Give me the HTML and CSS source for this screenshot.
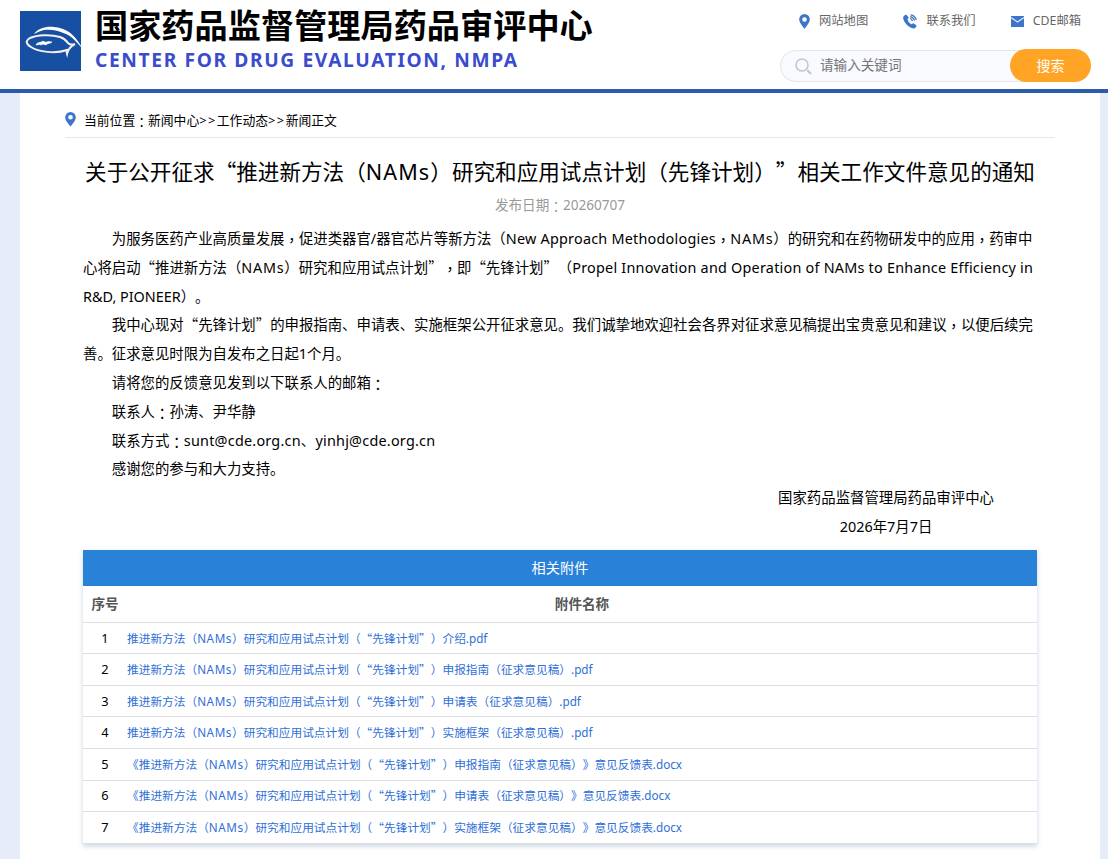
FILE: index.html
```html
<!DOCTYPE html>
<html lang="zh-CN">

<head>
    <meta charset="UTF-8">
    <meta name="viewport" content="width=device-width, initial-scale=1.0">
    <title>国家药品监督管理局药品审评中心</title>
    <link rel="stylesheet" href="styles.css">
</head>

<body>
    <header class="header">
        <div class="brand">
            <svg class="logo" width="64" height="60" viewBox="0 0 64 60">
                <rect width="61" height="60" fill="#1750a2" />
                <path d="M14 23C18 17 27 15 34 16C45 17 52 22 57 29L64 39C57 32 53 26 46 23C38 19 30 18 24 19C19 20 17 22 14 23Z" fill="#fff" />
                <path d="M40 26C30 23 17 24 10 27C5 30 6 33 11 36C18 41 36 43 47 39C48 38 46 40 47 43C48 38 51 35 55 33C52 34 49 33 48 32C46 29 43 27 40 26Z" fill="none" stroke="#f3f0ed" stroke-width="2" />
                <path d="M16 34C17 31 20 32 21 31C24 29 25 32 27 31C29 30 30 31 32 31C30 33 27 32 26 34C24 33 22 33 21 34C19 33 18 34 16 34Z" fill="#fff" stroke="#fff" stroke-width=".6" />
            </svg>
            <div class="brand-text">
                <h1>国家药品监督管理局药品审评中心</h1>
                <p>CENTER FOR DRUG EVALUATION, NMPA</p>
            </div>
        </div>
        <div class="tools">
            <ul class="links">
                <li>
                    <svg width="11" height="15" viewBox="0 0 11 15">
                        <path fill="#3c75c9" fill-rule="evenodd" d="M5.500 0A5.300 5.300 0 0 0 .2 5.300C.2 8.600 3.500 12 5.500 15C7.500 12 10.800 8.600 10.800 5.300A5.300 5.300 0 0 0 5.500 0ZM5.500 3.200A2.300 2.300 0 1 1 5.500 7.800A2.300 2.300 0 0 1 5.500 3.200Z" />
                    </svg>网站地图
                </li>
                <li>
                    <svg width="14" height="15" viewBox="0 0 14 15">
                        <path fill="#3c75c9" d="M3.400 .8L5.600 3.600C5.900 4.300 4.500 5.100 4.600 5.700C5.200 7.700 6.600 9.300 8.500 10.200C9.300 10.200 9.800 8.900 10.600 9.200L13.500 11.400C14 12.200 11.900 14.300 10.700 14.500C5.800 14.600 .2 8 .1 3.600C.2 2.300 2.400 .2 3.400 .8Z" />
                        <path fill="none" stroke="#3c75c9" stroke-width="1.200" d="M7 4.500Q9 4.800 9.500 7M7.300 2.600Q10.700 3.200 11.500 6.700M7.600 .9Q12.200 1.400 13.300 6.200" />
                    </svg>联系我们
                </li>
                <li>
                    <svg width="13" height="11" viewBox="0 0 13 11">
                        <rect width="13" height="11" fill="#3c75c9" />
                        <path d="M0 1.500L6.500 6L13 1.500" fill="none" stroke="#dce8fa" stroke-width="1.200" />
                    </svg>CDE邮箱
                </li>
            </ul>
            <form class="search">
                <svg width="17" height="17" viewBox="0 0 17 17">
                    <circle cx="7" cy="7" r="6" fill="none" stroke="#c2c4c7" stroke-width="1.500" />
                    <path d="M12.300 12.300L16 16" stroke="#c2c4c7" stroke-width="2" />
                </svg>
                <input type="text" placeholder="请输入关键词">
                <button type="button">搜索</button>
            </form>
        </div>
    </header>

    <main class="container">
        <div class="position">
            <svg width="11" height="15" viewBox="0 0 11 15">
                <path fill="#3c75c9" fill-rule="evenodd" d="M5.500 0A5.300 5.300 0 0 0 .2 5.300C.2 8.600 3.500 12 5.500 14.500C7.500 12 10.800 8.600 10.800 5.300A5.300 5.300 0 0 0 5.500 0ZM5.500 3A2.300 2.300 0 1 1 5.500 7.600A2.300 2.300 0 0 1 5.500 3Z" />
            </svg>
            <span>当前位置<i>：</i>新闻中心<span class="sep">&gt;&gt;</span>工作动态<span class="sep">&gt;&gt;</span>新闻正文</span>
        </div>

        <article class="news">
            <h2>关于公开征求<b>“</b>推进新方法（<em>NAMs</em>）研究和应用试点计划（先锋计划）<b>”</b>相关工作文件意见的通知</h2>
            <div class="date">发布日期<i>：</i>20260707</div>
            <div class="content">
                <p>为服务医药产业高质量发展<i>，</i>促进类器官/器官芯片等新方法（<span class="en">New Approach Methodologies</span><i>，</i><em>NAMs</em>）的研究和在药物研发中的应用<i>，</i>药审中<br>心将启动<b>“</b>推进新方法（<em>NAMs</em>）研究和应用试点计划<b>”</b><i>，</i>即<b>“</b>先锋计划<b>”</b>（<span class="en">Propel Innovation and Operation of NAMs to Enhance Efficiency in</span><br>R&amp;D, PIONEER）。</p>
                <p>我中心现对<b>“</b>先锋计划<b>”</b>的申报指南、申请表、实施框架公开征求意见。我们诚挚地欢迎社会各界对征求意见稿提出宝贵意见和建议<i>，</i>以便后续完<br>善。征求意见时限为自发布之日起1个月。</p>
                <p>请将您的反馈意见发到以下联系人的邮箱<i>：</i></p>
                <p>联系人<i>：</i>孙涛、尹华静</p>
                <p>联系方式<i>：</i><span class="en">sunt@cde.org.cn、yinhj@cde.org.cn</span></p>
                <p>感谢您的参与和大力支持。</p>
                <div class="sign">国家药品监督管理局药品审评中心<br>2026年7月7日</div>
            </div>

            <div class="files">
                <div class="files-title">相关附件</div>
                <table>
                    <thead>
                        <tr>
                            <th class="num">序号</th>
                            <th>附件名称</th>
                        </tr>
                    </thead>
                    <tbody>
                        <tr>
                            <td class="num">1</td>
                            <td><a>推进新方法（<em>NAMs</em>）研究和应用试点计划（<b>“</b>先锋计划<b>”</b>）介绍.pdf</a></td>
                        </tr>
                        <tr>
                            <td class="num">2</td>
                            <td><a>推进新方法（<em>NAMs</em>）研究和应用试点计划（<b>“</b>先锋计划<b>”</b>）申报指南（征求意见稿）.pdf</a></td>
                        </tr>
                        <tr>
                            <td class="num">3</td>
                            <td><a>推进新方法（<em>NAMs</em>）研究和应用试点计划（<b>“</b>先锋计划<b>”</b>）申请表（征求意见稿）.pdf</a></td>
                        </tr>
                        <tr>
                            <td class="num">4</td>
                            <td><a>推进新方法（<em>NAMs</em>）研究和应用试点计划（<b>“</b>先锋计划<b>”</b>）实施框架（征求意见稿）.pdf</a></td>
                        </tr>
                        <tr>
                            <td class="num">5</td>
                            <td><a>《推进新方法（<em>NAMs</em>）研究和应用试点计划（<b>“</b>先锋计划<b>”</b>）申报指南（征求意见稿）》意见反馈表.docx</a></td>
                        </tr>
                        <tr>
                            <td class="num">6</td>
                            <td><a>《推进新方法（<em>NAMs</em>）研究和应用试点计划（<b>“</b>先锋计划<b>”</b>）申请表（征求意见稿）》意见反馈表.docx</a></td>
                        </tr>
                        <tr>
                            <td class="num">7</td>
                            <td><a>《推进新方法（<em>NAMs</em>）研究和应用试点计划（<b>“</b>先锋计划<b>”</b>）实施框架（征求意见稿）》意见反馈表.docx</a></td>
                        </tr>
                    </tbody>
                </table>
            </div>
        </article>
    </main>
</body>

</html>
```
FILE: styles.css
```css
* {
    box-sizing: border-box;
    margin: 0;
    padding: 0;
}

body {
    height: 859px;
    overflow: hidden;
    display: flex;
    flex-direction: column;
    background-color: #e6edf9;
    color: #000;
    font-family: "Noto Sans", "Noto Sans CJK SC", sans-serif;
    text-spacing-trim: space-all;
    text-autospace: no-autospace;
}

/* full-width quotes */
b {
    font-family: "Noto Sans CJK SC", sans-serif;
    font-weight: inherit;
    line-height: 1;
}

/* centred comma and colon */
i {
    font-family: "Noto Sans CJK TC", sans-serif;
    font-feature-settings: "locl" 0;
    font-style: normal;
    line-height: 1;
    vertical-align: -0.13em;
}

em {
    font-style: normal;
    letter-spacing: 0.05em;
}

.en {
    letter-spacing: 0.23px;
}

.sep {
    letter-spacing: 1.5px;
}

svg {
    flex: none;
}

.header {
    flex: none;
    display: flex;
    justify-content: space-between;
    height: 93px;
    padding: 0 17px 0 20px;
    background-color: #fff;
    border-bottom: 4px solid #2b5bab;
}

.brand {
    display: flex;
    padding-top: 11px;
}

.brand-text {
    padding-left: 11px;
    white-space: nowrap;
}

.brand-text h1 {
    font-size: 33.2px;
    line-height: 36px;
    margin-top: -3px;
}

.brand-text p {
    color: #3a4ccd;
    font-size: 19.2px;
    font-weight: bold;
    line-height: 28px;
    letter-spacing: 1.63px;
    margin-top: 2px;
}

.tools {
    width: 311px;
}

.links {
    display: flex;
    justify-content: space-between;
    padding: 11px 10px 0 19px;
    list-style: none;
    color: #666;
    font-size: 12.3px;
    line-height: 20px;
}

.links li {
    display: flex;
    align-items: center;
    gap: 9px;
}

.search {
    display: flex;
    align-items: center;
    width: 311px;
    height: 32px;
    margin-top: 19px;
    padding-left: 14px;
    background-color: #f8faff;
    border: 1px solid #e4e6e9;
    border-right: none;
    border-radius: 16px;
}

.search input {
    width: 198px;
    padding: 0 0 3px 8px;
    border: none;
    outline: none;
    background: none;
    font-family: inherit;
    font-size: 13.6px;
}

.search input::placeholder {
    color: #757575;
}

.search button {
    width: 81px;
    height: 33px;
    margin: -1px 0 0 auto;
    padding-bottom: 1px;
    flex: none;
    border: none;
    border-radius: 17px;
    background-color: #ffa424;
    color: #fff;
    font-family: inherit;
    font-size: 14px;
}

.container {
    flex: 1;
    width: 1080px;
    margin-left: 20px;
    padding: 0 45px;
    background-color: #fff;
}

.position {
    display: flex;
    align-items: center;
    gap: 8px;
    height: 45px;
    padding-top: 8px;
    border-bottom: 1px solid #e6e6e6;
    font-size: 12.8px;
}

.news {
    padding: 0 18px;
}

.news h2 {
    margin-top: 18px;
    font-size: 21.6px;
    font-weight: normal;
    line-height: 32px;
    text-align: center;
    white-space: nowrap;
}

.date {
    margin-top: 6px;
    color: #999;
    font-size: 13.6px;
    line-height: 22px;
    text-align: center;
}

.content {
    margin-top: 9px;
    font-size: 14.4px;
    line-height: 28.8px;
    white-space: nowrap;
}

.content p {
    text-indent: 2em;
}

.sign {
    width: 302px;
    margin-left: auto;
    text-align: center;
}

.files {
    margin-top: 8px;
    box-shadow: 0 2px 5px rgba(40, 90, 140, 0.25);
}

.files-title {
    height: 36px;
    background-color: #2982d8;
    color: #fff;
    font-size: 14.2px;
    line-height: 36px;
    text-align: center;
}

table {
    width: 100%;
    border-collapse: separate;
    border-spacing: 0;
    font-size: 11.7px;
}

th,
td {
    padding-bottom: 1px;
    border-bottom: 1px solid #dedede;
}

th {
    height: 37px;
    color: #555;
    font-size: 13.6px;
}

td {
    height: 31.57px;
    line-height: 18px;
}

.num {
    width: 44px;
    text-align: center;
}

td.num {
    font-size: 12.8px;
}

a {
    color: #2f6fd6;
}
```
